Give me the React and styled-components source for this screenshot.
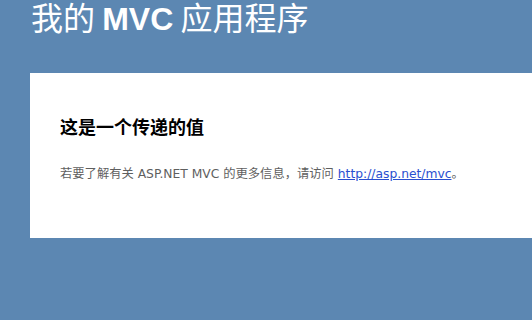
import React from "react";
import styled, { createGlobalStyle } from "styled-components";

const GlobalStyle = createGlobalStyle`
  html, body {
    margin: 0;
    padding: 0;
    background: #5c87b2;
  }
  body {
    font-family: "DejaVu Sans", "Noto Sans CJK SC", sans-serif;
    overflow: hidden;
  }
`;

const Page = styled.div`
  width: 100%;
  min-height: 320px;
  background: #5c87b2;
`;

const Header = styled.header`
  height: 73px;
  padding: 0 0 0 31px;
  box-sizing: border-box;
`;

const Title = styled.h1`
  margin: 0;
  font-family: "Noto Sans CJK SC", sans-serif;
  font-size: 32px;
  font-weight: 400;
  line-height: 32px;
  color: #fff;
`;

const Brand = styled.span`
  font-family: "Liberation Sans", Arial, sans-serif;
  font-weight: 700;
`;

const Main = styled.main`
  margin: 0 0 0 30px;
  padding: 30px 30px 15px;
  background: #fff;
`;

const Heading = styled.h2`
  margin: 12px 0 0;
  font-family: "Noto Sans CJK SC", sans-serif;
  font-size: 18px;
  font-weight: 700;
  line-height: 1.3;
  color: #000;
`;

const Text = styled.p`
  margin: 27px 0 40px;
  font-size: 12.3px;
  line-height: 18px;
  color: #5f5f5f;
`;

const Link = styled.a`
  color: #2a4fd0;
  text-decoration: underline;
`;

export default function App() {
  return (
    <>
      <GlobalStyle />
      <Page>
        <Header>
          <Title>
            我的 <Brand>MVC</Brand> 应用程序
          </Title>
        </Header>
        <Main>
          <Heading>这是一个传递的值</Heading>
          <Text>
            若要了解有关 ASP.NET MVC 的更多信息，请访问{" "}
            <Link href="http://asp.net/mvc" title="ASP.NET MVC 网站">
              http://asp.net/mvc
            </Link>
            。
          </Text>
        </Main>
      </Page>
    </>
  );
}
